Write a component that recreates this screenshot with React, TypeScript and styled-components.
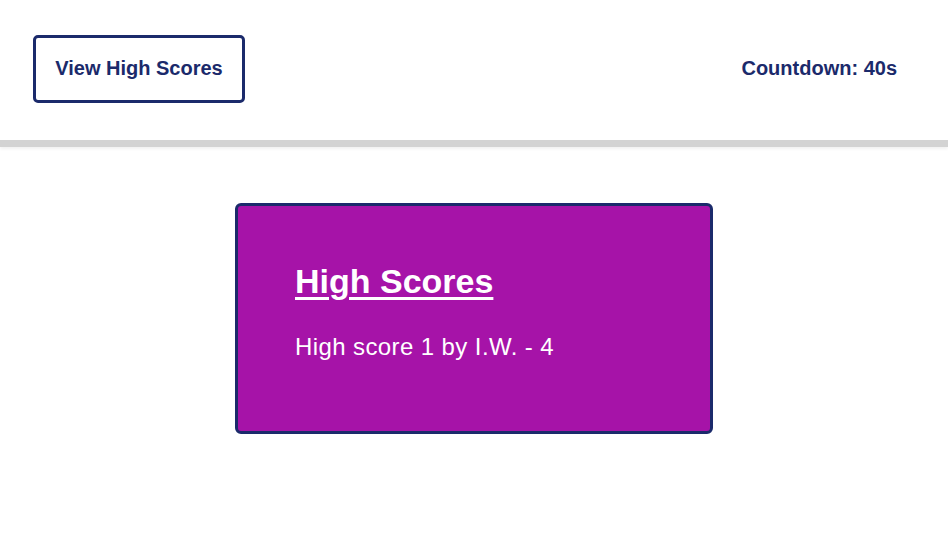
import React from "react";
import styled, { createGlobalStyle } from "styled-components";

const GlobalStyle = createGlobalStyle`
  html, body {
    margin: 0;
    padding: 0;
    background: #ffffff;
    font-family: "Liberation Sans", Arial, sans-serif;
  }
`;

const Header = styled.header`
  box-sizing: border-box;
  height: 147px;
  display: flex;
  align-items: center;
  justify-content: space-between;
  padding: 0 51px 2px 33px;
  border-bottom: 7px solid #d3d3d3;
  box-shadow: 0 2px 3px rgba(0, 0, 0, 0.06);
`;

const ScoresButton = styled.button`
  box-sizing: border-box;
  height: 68px;
  width: 212px;
  padding: 0 18px 2px;
  background: #ffffff;
  border: 3px solid #1b2a6b;
  border-radius: 5px;
  color: #1b2a6b;
  font-family: inherit;
  font-size: 20px;
  font-weight: 700;
  cursor: pointer;
`;

const Countdown = styled.div`
  color: #1b2a6b;
  font-size: 20px;
  font-weight: 700;
  padding-bottom: 2px;
`;

const Main = styled.main`
  display: flex;
  justify-content: center;
  padding-top: 56px;
`;

const Card = styled.section`
  box-sizing: border-box;
  width: 478px;
  height: 231px;
  padding: 56px 57px 0;
  background: #a613a8;
  border: 3px solid #1b2a6b;
  border-radius: 6px;
  color: #ffffff;
`;

const Title = styled.h2`
  margin: 0 0 32px;
  font-size: 34px;
  line-height: 39px;
  font-weight: 700;
  text-decoration: underline;
  text-decoration-thickness: 3px;
  text-underline-offset: 4px;
`;

const ScoreLine = styled.p`
  margin: 0;
  font-size: 24px;
  letter-spacing: 0.4px;
`;

const App = () => {
  return (
    <>
      <GlobalStyle />
      <Header>
        <ScoresButton>View High Scores</ScoresButton>
        <Countdown>Countdown: 40s</Countdown>
      </Header>
      <Main>
        <Card>
          <Title>High Scores</Title>
          <ScoreLine>High score 1 by I.W. - 4</ScoreLine>
        </Card>
      </Main>
    </>
  );
};

export default App;
